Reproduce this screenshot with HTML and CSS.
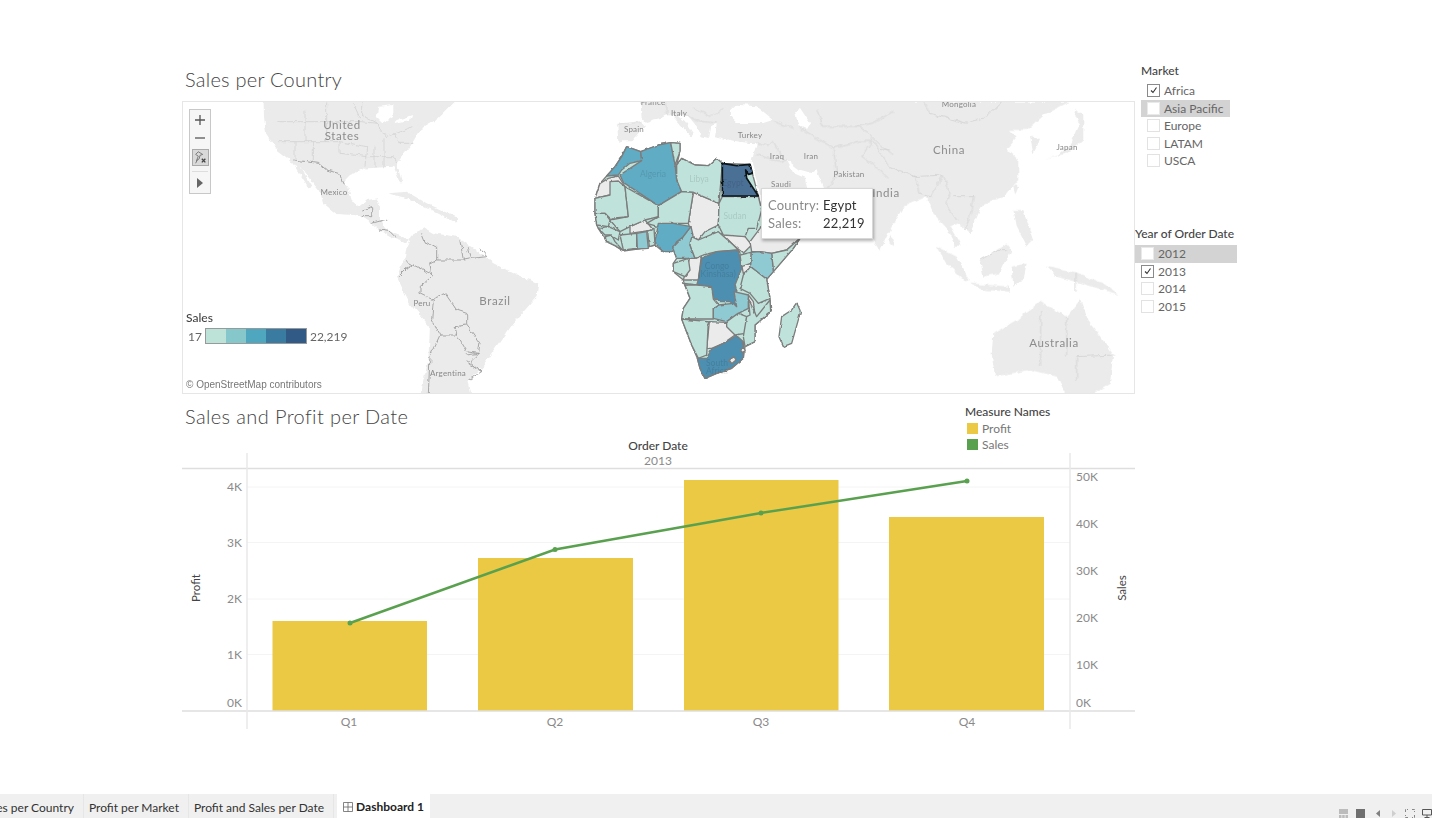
FILE: index.html
```html
<!DOCTYPE html>
<html lang="en">
<head>
<meta charset="utf-8">
<title>Dashboard 1</title>
<link rel="stylesheet" href="styles.css">
</head>
<body>
<main class="dashboard">
  <section class="views">
    <h2 class="view-title map-title">Sales per Country</h2>
    <div class="map-box">
      <svg class="map-svg" viewBox="183 102 951 291" aria-label="Map of sales per country">
        <defs>
          <filter id="rough" x="-5%" y="-5%" width="110%" height="110%">
            <feTurbulence type="fractalNoise" baseFrequency=".14" numOctaves="3" seed="4" result="n"/>
            <feDisplacementMap in="SourceGraphic" in2="n" scale="5" xChannelSelector="R" yChannelSelector="G"/>
            <feGaussianBlur stdDeviation=".35"/>
          </filter>
          <filter id="rough-sm" x="-5%" y="-5%" width="110%" height="110%">
            <feTurbulence type="fractalNoise" baseFrequency=".2" numOctaves="2" seed="9" result="n"/>
            <feDisplacementMap in="SourceGraphic" in2="n" scale="2.500" xChannelSelector="R" yChannelSelector="G"/>
            <feGaussianBlur stdDeviation=".3"/>
          </filter>
        </defs>
        <g filter="url(#rough)">
        <g class="land">
          <g transform="translate(180 60) scale(.33333)">
            <polygon points="250,100 252,170 258,220 290,270 330,300 345,320 385,385 396,382 360,320 420,395 430,430 470,462 520,465 545,470 575,490 605,515 640,535 680,548 690,540 640,520 615,505 600,480 600,440 590,415 565,420 540,440 515,420 505,385 490,365 510,345 560,325 640,320 660,370 667,370 650,310 690,260 720,210 770,180 850,100"/>
            <polygon points="680,560 700,520 735,505 760,520 830,530 880,565 940,610 1000,640 1075,670 1070,710 1000,790 950,860 905,925 865,960 875,1010 720,1010 745,900 750,800 690,730 650,650 675,590"/>
            <polygon points="625,400 680,395 740,430 830,470 832,488 740,442 680,415"/>
          </g>
          <g transform="translate(560 98) scale(.33333)">
            <polygon points="240,0 245,60 258,75 300,62 330,45 360,80 395,115 400,108 375,70 352,50 385,55 410,85 425,115 445,120 450,85 470,78 465,115 520,128 565,135 590,135 575,190 600,290 1030,290 1030,0"/>
            <polygon points="175,135 172,80 240,72 255,85 235,105 215,130 190,130"/>
          </g>
          <g transform="translate(870 60) scale(.33333)">
            <polygon points="0,125 0,530 30,572 60,510 100,440 170,410 190,460 235,510 255,560 275,560 240,500 265,490 300,520 330,450 340,430 400,410 445,360 445,300 410,265 440,230 420,210 470,210 520,165 600,125"/>
            <polygon points="480,230 510,240 490,280"/>
            <polygon points="520,300 565,285 605,250 630,190 612,170 620,150 640,165 640,240 590,280"/>
            <polygon points="430,375 445,378 435,405"/>
            <polygon points="200,560 260,590 300,660 280,660 230,610"/>
            <polygon points="330,600 380,570 410,550 425,570 390,640 340,650"/>
            <polygon points="300,670 420,680 420,695 340,690"/>
            <polygon points="425,620 470,610 460,660 430,680"/>
            <polygon points="430,450 460,450 490,540 470,560 440,500"/>
            <polygon points="530,620 620,640 700,670 750,705 640,672 560,650"/>
            <polygon points="370,820 440,780 510,725 590,770 630,720 660,790 730,880 720,970 660,1010 590,1010 560,950 480,930 375,950 365,880"/>
            <polygon points="60,525 75,540 68,558 58,550"/>
          </g>
        </g>
        <g class="sea">
          <g transform="translate(180 60) scale(.33333)">
            <polygon points="595,140 640,135 640,170 610,190 590,170"/>
            <polygon points="650,180 700,165 690,180 640,190"/>
          </g>
          <g transform="translate(560 98) scale(.33333)">
            <polygon points="510,40 530,20 590,25 640,65 610,75 530,75 510,55"/>
            <polygon points="705,40 720,30 750,75 740,92 715,85"/>
            <polygon points="680,185 720,215 755,225 770,215 800,290 745,290 735,240 700,225"/>
          </g>
        </g>
        <g class="borders-soft">
          <g transform="translate(180 60) scale(.33333)">
            <polyline points="292,185 440,185 540,185 590,190"/>
            <polyline points="375,155 375,245 480,245 560,260"/>
            <polyline points="295,245 375,245"/>
            <polyline points="440,130 440,245"/>
            <polyline points="545,130 545,165 590,190 620,230 700,200"/>
            <polyline points="480,245 480,280 560,290 640,290 650,310"/>
            <polyline points="560,260 555,320"/>
            <polyline points="585,260 585,322"/>
            <polyline points="612,235 612,320"/>
            <polyline points="640,220 660,250 700,250"/>
            <polyline points="345,245 345,300"/>
            <polyline points="400,245 400,310"/>
            <polyline points="520,130 540,175"/>
          </g>
          <g transform="translate(560 98) scale(.33333)">
            <polyline points="172,80 240,72"/>
            <polyline points="320,15 320,50 370,45 420,70 470,75"/>
            <polyline points="400,30 450,55 490,35"/>
            <polyline points="590,135 620,145 640,130"/>
            <polyline points="590,170 660,190 680,185"/>
            <polyline points="640,130 670,185"/>
            <polyline points="820,150 830,230 805,270"/>
            <polyline points="820,150 895,130 935,130 905,175 940,200 985,240"/>
            <polyline points="770,35 790,85 890,85 940,75 1000,40"/>
            <polyline points="720,90 820,150"/>
            <polyline points="640,70 700,90"/>
            <polyline points="890,85 920,100 960,140 1000,170"/>
          </g>
          <g transform="translate(870 60) scale(.33333)">
            <polyline points="160,125 180,160 290,190 350,170 395,125"/>
            <polyline points="0,230 60,320 130,350 220,345 240,400 225,430 260,480"/>
            <polyline points="30,265 60,270"/>
            <polyline points="135,345 150,400 180,410 220,345"/>
            <polyline points="250,410 310,410 300,470 285,510"/>
            <polyline points="330,600 380,572 410,572"/>
            <polyline points="618,640 618,695"/>
            <polyline points="512,750 512,920"/>
            <polyline points="590,770 590,890"/>
            <polyline points="620,890 735,885"/>
            <polyline points="620,890 620,960"/>
          </g>
        </g>
        <g class="borders-dark" transform="translate(180 60) scale(.33333)">
          <polyline points="340,300 415,310 440,330 475,340 490,370"/>
          <polyline points="550,450 575,440 575,470 545,470"/>
          <polyline points="575,490 630,475"/>
          <polyline points="600,510 630,515 650,535"/>
          <polyline points="725,520 735,545 770,565 770,600 750,610"/>
          <polyline points="840,540 850,600 800,600 770,600"/>
          <polyline points="865,565 875,595 850,600"/>
          <polyline points="900,565 920,590 875,595"/>
          <polyline points="750,610 755,650 720,680 720,700 760,720"/>
          <polyline points="675,600 700,615 750,640"/>
          <polyline points="655,650 680,625 700,615"/>
          <polyline points="760,720 770,710 795,700 830,750 860,760 860,795 900,850 895,880 860,885"/>
          <polyline points="760,720 755,780 780,825 750,890 745,1000"/>
          <polyline points="780,825 830,825 825,800 860,795"/>
          <polyline points="830,825 860,875 895,880 870,905 905,935"/>
          <polyline points="860,905 905,935 865,960"/>
        </g>
        </g>
        <g filter="url(#rough-sm)">
        <g class="africa" transform="translate(580 95) scale(.33333)">
          <polygon class="c1 base" points="80,243 105,215 125,185 140,155 182,170 235,150 272,143 300,145 300,170 290,210 305,190 345,210 385,212 410,190 427,205 510,208 535,303 545,345 550,380 660,430 640,460 580,530 560,553 570,610 572,650 525,690 525,740 495,755 490,790 455,820 410,835 375,850 360,820 352,790 335,750 305,672 310,640 330,610 312,565 310,555 280,530 280,505 290,490 278,458 250,470 225,450 172,462 130,468 105,452 80,440 55,400 50,390 45,355 45,310 60,265"/>
          <polygon class="nd" points="45,310 60,265 85,250 115,243 135,275 90,300"/>
          <polygon class="nd" points="330,485 365,475 355,555 310,555"/>
          <polygon class="nd" points="340,292 417,325 415,390 375,410 355,435 335,420 325,385"/>
          <polygon class="nd" points="150,395 195,375 220,405 170,412 150,415"/>
          <polygon class="nd" points="425,415 495,425 515,450 490,475 460,450"/>
          <polygon class="nd" points="510,440 540,400 550,380 660,430 620,465 575,475 540,470 515,470"/>
          <polygon class="nd" points="388,680 440,682 465,720 430,745 395,760 380,760"/>
          <polygon class="nd" points="505,600 520,620 525,660 505,640"/>
          <polygon class="nd" points="485,510 512,505 512,520 490,535"/>
          <polygon class="c3" points="80,243 115,240 125,225 150,205 185,197 182,170 140,155 125,185 105,215"/>
          <polygon class="c3" points="120,240 185,197 182,170 235,150 272,143 285,205 290,255 305,290 235,332 130,262"/>
          <polygon class="c1" points="272,143 300,145 300,170 285,210"/>
          <polygon class="c1" points="290,210 305,190 345,210 385,212 410,190 427,205 417,325 340,292 305,290 290,255"/>
          <polygon class="c1" points="417,325 427,305 535,305 545,345 530,400 505,400 495,425 430,420 415,390"/>
          <polygon class="c1" points="45,310 90,300 90,260 115,258 135,275 145,365 90,370 75,355 45,355"/>
          <polygon class="c1" points="135,275 235,332 235,365 195,375 150,395 120,410 90,375 145,365"/>
          <polygon class="c1" points="235,332 305,290 340,292 325,385 280,385 235,395 200,385 235,365"/>
          <polygon class="c1" points="45,355 75,355 90,375 85,395 50,390"/>
          <polygon class="c1" points="55,400 85,395 120,410 115,435 90,420 75,420"/>
          <polygon class="c1" points="75,425 95,420 105,440 130,468 105,452 80,440"/>
          <polygon class="c1" points="120,420 170,415 170,460 130,465"/>
          <polygon class="c2" points="170,415 200,410 205,460 172,462"/>
          <polygon class="c1" points="203,410 222,400 225,450 208,455"/>
          <polygon class="c3" points="235,385 280,385 333,395 310,425 290,440 275,470 250,470 225,440"/>
          <polygon class="c2" points="333,395 310,425 278,458 290,490 345,490 330,450 340,425"/>
          <polygon class="c1" points="335,425 355,435 415,410 460,450 475,465 410,470 370,480 345,490 330,450"/>
          <polygon class="c1" points="660,430 640,460 580,530 575,475 620,465"/>
          <polygon class="c2" points="513,472 540,470 575,475 580,530 560,553 512,515"/>
          <polygon class="c1" points="480,480 513,472 512,505 485,515"/>
          <polygon class="c1" points="490,540 512,515 560,553 570,610 535,625 510,595 480,580"/>
          <polygon class="c1" points="280,505 325,490 330,525 315,545 280,530"/>
          <polygon class="c4" points="312,565 350,570 355,555 365,490 410,470 475,465 485,520 465,570 475,610 465,618 470,635 450,620 420,620 400,610 395,575 350,570"/>
          <polygon class="c1" points="315,570 350,570 395,575 400,612 415,630 400,640 400,672 305,672 310,640 330,610"/>
          <polygon class="c2" points="400,640 415,630 460,625 470,635 462,590 505,600 505,640 475,655 440,680 400,670"/>
          <polygon class="c1" points="440,680 475,655 500,665 495,715 465,720 440,695"/>
          <polygon class="c1" points="505,610 530,665 570,615 572,650 525,690 525,740 495,755 490,725 500,665 510,660"/>
          <polygon class="c1" points="305,672 385,680 380,780 355,790 335,750"/>
          <polygon class="c4" points="352,790 380,790 395,762 430,745 470,722 490,740 490,790 455,820 410,835 375,850 360,820"/>
          <polygon class="nd" points="448,795 462,785 468,795 455,806"/>
          <polygon class="nd" points="482,765 492,758 496,768 486,772"/>
          <polygon class="c1" points="650,623 662,650 635,745 610,755 597,725 605,665 635,645"/>
          <polygon class="egypt" points="427,205 470,212 510,208 517,235 505,238 497,225 500,250 535,303 427,303"/>
        </g>
        </g>
        <text class="lbl-lg" x="342" y="129">United</text>
        <text class="lbl-lg" x="342" y="140">States</text>
        <text class="lbl-sm" x="334" y="195">Mexico</text>
        <text class="lbl-lg" x="495" y="305">Brazil</text>
        <text class="lbl-sm" x="422" y="306">Peru</text>
        <text class="lbl-sm" x="448" y="376">Argentina</text>
        <text class="lbl-sm" x="653" y="105">France</text>
        <text class="lbl-sm" x="679" y="116">Italy</text>
        <text class="lbl-sm" x="634" y="132">Spain</text>
        <text class="lbl-sm" x="750" y="138">Turkey</text>
        <text class="lbl-sm" x="777" y="159">Iraq</text>
        <text class="lbl-sm" x="811" y="159">Iran</text>
        <text class="lbl-sm" x="849" y="177">Pakistan</text>
        <text class="lbl-sm" x="781" y="187">Saudi</text>
        <text class="lbl-lg" x="886" y="197">India</text>
        <text class="lbl-lg" x="949" y="154">China</text>
        <text class="lbl-sm" x="1067" y="150">Japan</text>
        <text class="lbl-sm" x="959" y="107">Mongolia</text>
        <text class="lbl-lg" x="1054" y="347">Australia</text>
        <text class="lbl-on" x="653" y="177">Algeria</text>
        <text class="lbl-on" x="699" y="182">Libya</text>
        <text class="lbl-on" x="733" y="186">Egypt</text>
        <text class="lbl-on" x="735" y="219">Sudan</text>
        <text class="lbl-on" x="717" y="269">Congo</text>
        <text class="lbl-on" x="717" y="277">(Kinshasa)</text>
        <text class="lbl-on" x="717" y="366">South</text>
        <text class="lbl-on" x="717" y="374">Africa</text>
      </svg>
      <div class="zoom-ctl">
        <svg class="zoom-icon" viewBox="0 0 20 18"><path class="ico-line" d="M5 9h10M10 4v10"/></svg>
        <svg class="zoom-icon" viewBox="0 0 20 18"><path class="ico-line" d="M5 9h10"/></svg>
        <span class="zoom-pin">
          <svg class="pin-icon" viewBox="0 0 17 17"><path class="pin-line" d="M6 2l5 3-3 1-1 4-3 2 2-5-3-2zM3 15l2-4"/><path class="pin-x" d="M10 10l4 4M14 10l-4 4"/></svg>
        </span>
        <span class="zoom-sep"></span>
        <svg class="zoom-icon play" viewBox="0 0 20 18"><path class="ico-fill" d="M7 4l6 5-6 5z"/></svg>
      </div>
      <div class="color-legend">
        <div class="legend-title">Sales</div>
        <div class="ramp-row">
          <span class="ramp-val">17</span>
          <span class="ramp">
            <i class="r1"></i><i class="r2"></i><i class="r3"></i><i class="r4"></i><i class="r5"></i>
          </span>
          <span class="ramp-val">22,219</span>
        </div>
      </div>
      <div class="attribution">© OpenStreetMap contributors</div>
      <div class="tooltip">
        <span class="tip-key">Country:</span><span class="tip-val">Egypt</span>
        <span class="tip-key">Sales:</span><span class="tip-val">22,219</span>
      </div>
    </div>
    <div class="chart-head">
      <h2 class="view-title chart-title">Sales and Profit per Date</h2>
      <div class="axis-head">Order Date</div>
      <div class="measure-legend">
        <div class="legend-title">Measure Names</div>
        <div class="measure-item"><span class="swatch yellow"></span>Profit</div>
        <div class="measure-item"><span class="swatch green"></span>Sales</div>
      </div>
    </div>
    <svg class="chart-svg" viewBox="182 453 953 277" aria-label="Sales and profit per quarter">
      <g class="grid">
        <line x1="247" x2="1070" y1="487" y2="487"/>
        <line x1="247" x2="1070" y1="542.5" y2="542.5"/>
        <line x1="247" x2="1070" y1="599" y2="599"/>
        <line x1="247" x2="1070" y1="654.5" y2="654.5"/>
      </g>
      <rect class="bar" x="272.5" y="621" width="154.5" height="90"/>
      <rect class="bar" x="478" y="558" width="155" height="153"/>
      <rect class="bar" x="684" y="480" width="154.5" height="231"/>
      <rect class="bar" x="889" y="517" width="155" height="194"/>
      <g class="axes">
        <line x1="182" x2="1135" y1="468.5" y2="468.5"/>
        <line x1="182" x2="1135" y1="711" y2="711"/>
        <line class="axis-v" x1="247" x2="247" y1="453" y2="729"/>
        <line class="axis-v" x1="1070" x2="1070" y1="453" y2="729"/>
      </g>
      <polyline class="sales-line" points="350,623 555,549.5 761,513 967,481"/>
      <g class="sales-dots">
        <circle cx="350" cy="623" r="2.5"/><circle cx="555" cy="549.5" r="2.5"/>
        <circle cx="761" cy="513" r="2.5"/><circle cx="967" cy="481" r="2.5"/>
      </g>
      <text class="tick mid" x="658" y="465">2013</text>
      <text class="tick end" x="242" y="491">4K</text>
      <text class="tick end" x="242" y="547">3K</text>
      <text class="tick end" x="242" y="603">2K</text>
      <text class="tick end" x="242" y="659">1K</text>
      <text class="tick end" x="242" y="707">0K</text>
      <text class="tick" x="1076" y="481">50K</text>
      <text class="tick" x="1076" y="528">40K</text>
      <text class="tick" x="1076" y="575">30K</text>
      <text class="tick" x="1076" y="622">20K</text>
      <text class="tick" x="1076" y="669">10K</text>
      <text class="tick" x="1076" y="707">0K</text>
      <text class="tick mid" x="349" y="726">Q1</text>
      <text class="tick mid" x="555" y="726">Q2</text>
      <text class="tick mid" x="761" y="726">Q3</text>
      <text class="tick mid" x="967" y="726">Q4</text>
      <text class="axis-name" transform="translate(200 588) rotate(-90)">Profit</text>
      <text class="axis-name" transform="translate(1126 588) rotate(-90)">Sales</text>
    </svg>
  </section>
  <aside class="filters">
    <div class="filter market">
      <div class="filter-title">Market</div>
      <div class="filter-row"><span class="box on"><svg class="tick-mark" viewBox="0 0 11 11"><path d="M3 5.5l2 2 3.5-5"/></svg></span>Africa</div>
      <div class="filter-row hot"><span class="box blank"></span>Asia Pacific</div>
      <div class="filter-row"><span class="box"></span>Europe</div>
      <div class="filter-row"><span class="box"></span>LATAM</div>
      <div class="filter-row"><span class="box"></span>USCA</div>
    </div>
    <div class="filter year">
      <div class="filter-title">Year of Order Date</div>
      <div class="filter-row hot"><span class="box blank"></span>2012</div>
      <div class="filter-row"><span class="box on"><svg class="tick-mark" viewBox="0 0 11 11"><path d="M3 5.5l2 2 3.5-5"/></svg></span>2013</div>
      <div class="filter-row"><span class="box"></span>2014</div>
      <div class="filter-row"><span class="box"></span>2015</div>
    </div>
  </aside>
</main>
<footer class="tabbar">
  <nav class="tabs">
    <span class="tab">Sales per Country</span>
    <span class="tab">Profit per Market</span>
    <span class="tab">Profit and Sales per Date</span>
    <span class="tab active">
      <svg class="dash-icon" viewBox="0 0 10 10"><path d="M.5.5h9v9h-9zM5 .5v9M.5 5h9"/></svg>Dashboard 1
    </span>
  </nav>
  <div class="status-icons">
    <svg class="st-grid" viewBox="0 0 9 9"><path d="M0 0h9v5H0zM0 6h2.5v3H0zM3.2 6h2.5v3H3.2zM6.5 6H9v3H6.5z"/></svg>
    <span class="st-square"></span>
    <svg class="st-tri" viewBox="0 0 4 7"><path d="M4 0v7L0 3.5z"/></svg>
    <svg class="st-tri dim" viewBox="0 0 4 7"><path d="M0 0v7l4-3.5z"/></svg>
    <svg class="st-full" viewBox="0 0 10 9"><path d="M.5 3V.5H3M7 .5h2.500V3M9.500 6v2.500H7M3 8.500H.5V6"/></svg>
    <svg class="st-mon" viewBox="0 0 10 9"><path d="M.5.5h9v5.500h-9zM5 6v2.500M2.500 8.500h5"/></svg>
  </div>
</footer>
</body>
</html>
```

FILE: styles.css
```css
* { box-sizing: border-box; }
html, body { margin: 0; height: 100%; }
body {
  display: flex;
  flex-direction: column;
  width: 1432px;
  height: 818px;
  overflow: hidden;
  background: #fff;
  font-family: Lato, "Open Sans", sans-serif;
  color: #555;
}
.dashboard {
  flex: 1;
  display: flex;
  padding: 67px 0 0 182px;
}
.views { width: 953px; display: flex; flex-direction: column; }
.view-title {
  margin: 0;
  font-size: 20px;
  font-weight: 300;
  line-height: 24px;
  color: #444;
  letter-spacing: .25px;
}
.map-title { height: 34px; padding-left: 3px; }

/* Map */
.map-box { position: relative; height: 293px; border: 1px solid #e6e6e6; background: #fff; }
.map-svg { display: block; width: 951px; height: 291px; }
.land polygon { fill: #ebebeb; }
.sea polygon { fill: #fff; }
.borders-soft polyline { fill: none; stroke: #d2d2d2; stroke-width: 2.4; }
.borders-dark polyline { fill: none; stroke: #9a9a9a; stroke-width: 2.6; }
.africa polygon { stroke: #7c7c7c; stroke-width: 4; stroke-linejoin: round; }
.africa .nd { fill: #ebebeb; }
.africa .c1 { fill: #bfe3da; }
.africa .c2 { fill: #8fcad2; }
.africa .c3 { fill: #60acc4; }
.africa .c4 { fill: #4d8fb1; }
.africa .egypt { fill: #4c6f96; stroke: #0f1418; stroke-width: 5; }
.lbl-lg, .lbl-sm, .lbl-on { text-anchor: middle; font-family: Lato, sans-serif; }
.lbl-lg { font-size: 11.500px; fill: #8c8c8c; letter-spacing: .6px; }
.lbl-sm { font-size: 8px; fill: #888; letter-spacing: .2px; }
.lbl-on { font-size: 8.500px; fill: #000; fill-opacity: .12; }

.zoom-ctl {
  position: absolute;
  left: 6px;
  top: 7px;
  width: 22px;
  height: 85px;
  padding: 0 1px;
  display: flex;
  flex-direction: column;
  align-items: center;
  background: #f6f6f6;
  border: 1px solid #c8c8c8;
}
.zoom-icon { display: block; width: 20px; height: 18px; flex: none; }
.zoom-icon:first-child { margin-top: 1px; }
.play { margin-top: 2px; }
.ico-line { fill: none; stroke: #555; stroke-width: 1.300; }
.ico-fill { fill: #666; }
.zoom-pin {
  display: flex;
  width: 17px;
  height: 17px;
  margin-top: 2px;
  background: #d9d9d9;
  border: 1px solid #aaa;
}
.pin-icon { width: 100%; height: 100%; }
.pin-line { fill: none; stroke: #666; stroke-width: .9; }
.pin-x { fill: none; stroke: #444; stroke-width: 1.500; }
.zoom-sep { width: 16px; height: 1px; margin-top: 5px; background: #ddd; flex: none; }

.color-legend { position: absolute; left: 3px; top: 208px; }
.legend-title { font-size: 12px; line-height: 16px; color: #444; font-weight: 500; }
.ramp-row { display: flex; align-items: center; margin-top: 2px; padding-left: 2px; font-size: 12px; color: #666; }
.ramp-val { line-height: 15px; }
.ramp { display: flex; width: 102px; height: 16px; margin: 0 3px; border: 1px solid #999; }
.ramp i { flex: 1; }
.r1 { background: #bde3d9; }
.r2 { background: #86c7cc; }
.r3 { background: #4fa6bf; }
.r4 { background: #3a7ba1; }
.r5 { background: #325a87; }
.attribution {
  position: absolute;
  left: 3px;
  bottom: 2px;
  font: 10px/12px "Liberation Sans", Arial, sans-serif;
  color: #777;
}
.tooltip {
  position: absolute;
  left: 578px;
  top: 86px;
  width: 112px;
  height: 51px;
  padding: 7px 0 0 6px;
  display: grid;
  grid-template-columns: 55px auto;
  grid-auto-rows: 18px;
  align-items: center;
  background: #fff;
  border: 1px solid #d8d8d8;
  box-shadow: 1px 2px 3px rgba(0, 0, 0, .3);
  font-size: 13px;
  letter-spacing: .2px;
}
.tip-key { color: #8a8a8a; }
.tip-val { color: #333; }

/* Chart */
.chart-head { display: grid; grid-template-columns: 436px 80px 1fr; height: 59px; }
.chart-title { padding: 10px 0 0 3px; letter-spacing: .38px; white-space: nowrap; }
.axis-head {
  align-self: end;
  padding-bottom: 0;
  text-align: center;
  font-size: 12px;
  line-height: 14px;
  color: #444;
  font-weight: 500;
}
.measure-legend { padding: 10px 0 0 267px; white-space: nowrap; }
.measure-item { display: flex; align-items: center; height: 16px; padding-left: 2px; font-size: 12px; color: #777; }
.swatch { width: 11px; height: 11px; margin-right: 4px; }
.yellow { background: #ebc944; }
.green { background: #59a14f; }
.chart-svg { display: block; width: 953px; height: 277px; }
.grid line { stroke: #f4f4f4; stroke-width: 1; }
.bar { fill: #ebc944; }
.axes line { stroke: #dedede; stroke-width: 1.300; }
.axes .axis-v { stroke: #e8e8e8; stroke-width: 1.500; }
.sales-line { fill: none; stroke: #59a14f; stroke-width: 2.500; }
.sales-dots circle { fill: #59a14f; }
.tick { font-family: Lato, sans-serif; font-size: 12px; fill: #8a8a8a; }
.mid { text-anchor: middle; }
.end { text-anchor: end; }
.axis-name { font-family: Lato, sans-serif; font-size: 11.500px; fill: #444; text-anchor: middle; }

/* Filters */
.filters { width: 110px; display: flex; flex-direction: column; font-size: 12px; }
.filter-title { font-size: 12px; line-height: 16px; color: #444; font-weight: 500; white-space: nowrap; }
.market { padding-left: 6px; width: 95px; height: 158px; margin-top: -4px; }
.year { width: 102px; margin-top: 5px; }
.market .filter-title { margin-bottom: 3px; }
.year .filter-title { margin-bottom: 3px; }
.filter-row {
  display: flex;
  align-items: center;
  height: 17.500px;
  padding-left: 6px;
  color: #666;
  white-space: nowrap;
}
.market .filter-row { padding-left: 6px; }
.hot { background: #d3d3d3; }
.box {
  display: flex;
  width: 13px;
  height: 13px;
  margin-right: 4px;
  background: #fff;
  border: 1px solid #e2e2e2;
  flex: none;
}
.box.on { border-color: #8a8a8a; }
.box.blank { border-color: #e9e9e9; }
.tick-mark { width: 100%; height: 100%; }
.tick-mark path { fill: none; stroke: #333; stroke-width: 1.100; }

/* Tabs */
.tabbar {
  flex: none;
  display: flex;
  justify-content: space-between;
  height: 24px;
  background: #f0f0f0;
  overflow: hidden;
}
.tabs { display: flex; margin-left: -24px; }
.tab {
  display: flex;
  align-items: center;
  padding: 3px 9px 0 5px;
  font-size: 12px;
  color: #333;
  white-space: nowrap;
  border-right: 1px solid #e6e6e6;
}
.tab.active { padding: 1px 6px 0; margin-left: 3px; background: #fff; font-weight: 700; color: #222; border: 0; }
.dash-icon { width: 10px; height: 10px; margin-right: 3px; }
.dash-icon path { fill: none; stroke: #666; stroke-width: .8; }
.status-icons { display: flex; align-items: flex-start; padding-top: 15px; }
.status-icons svg, .st-square { flex: none; display: block; }
.st-grid { width: 9px; height: 9px; fill: #bcbcbc; }
.st-square { width: 9px; height: 9px; margin-left: 8px; background: #6f6f6f; }
.st-tri { width: 4px; height: 7px; margin: 1px 0 0 11px; fill: #808080; }
.st-tri.dim { fill: #cfcfcf; margin-left: 12px; }
.st-full { width: 10px; height: 9px; margin-left: 9px; }
.st-mon { width: 10px; height: 9px; margin-left: 7px; }
.st-full path { fill: none; stroke: #888; stroke-width: 1; stroke-dasharray: 3 1; }
.st-mon path { fill: none; stroke: #555; stroke-width: 1; }
```
